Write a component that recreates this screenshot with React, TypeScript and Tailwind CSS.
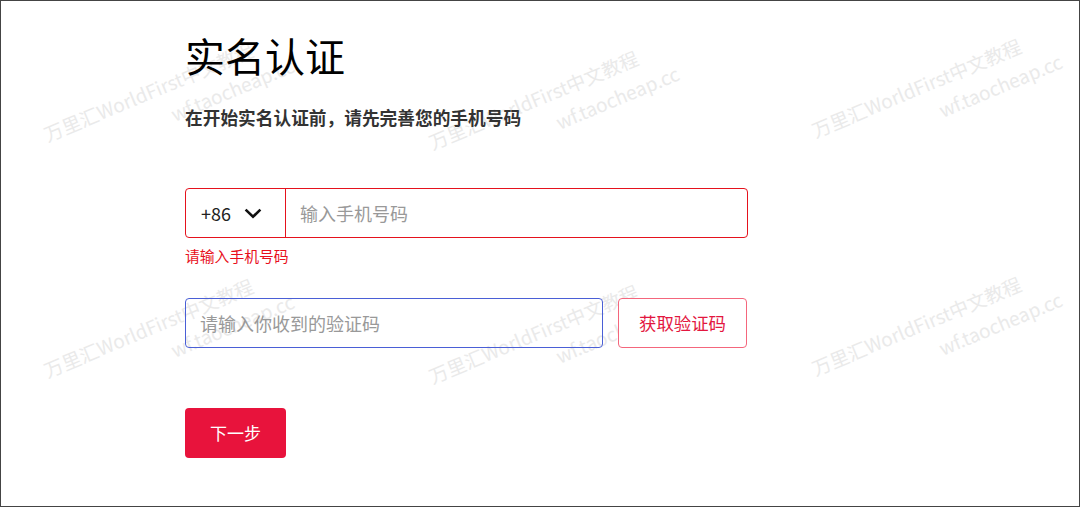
const font = { fontFamily: '"Noto Sans CJK SC", "Noto Sans", sans-serif' };

function Watermark({ className }: { className: string }) {
  return (
    <div
      className={`absolute pointer-events-none select-none origin-top-left -rotate-[22.6deg] text-[#eaeaea] text-[19px] leading-[30px] whitespace-nowrap ${className}`}
    >
      <div>万里汇WorldFirst中文教程</div>
      <div className="pl-[125px]">wf.taocheap.cc</div>
    </div>
  );
}

export default function App() {
  return (
    <div className="w-[1080px] h-[507px] bg-white border border-[#444] relative overflow-hidden text-black" style={font}>
      {/* Watermarks */}
      <Watermark className="left-[38px] top-[120px]" />
      <Watermark className="left-[423px] top-[128px]" />
      <Watermark className="left-[806px] top-[116px]" />
      <Watermark className="left-[38px] top-[356px]" />
      <Watermark className="left-[423px] top-[362px]" />
      <Watermark className="left-[806px] top-[354px]" />

      <div className="pl-[184px] pt-[26px] w-[747px] flex flex-col relative">
        <h1 className="text-[40px] leading-[56px] font-normal">实名认证</h1>
        <p className="mt-[21px] text-[17.7px] leading-[26px] font-bold text-[#333]">
          在开始实名认证前，请先完善您的手机号码
        </p>

        {/* Phone */}
        <div className="mt-[58px] h-[50px] flex items-stretch border border-[#e5121d] rounded-[4px]">
          <div className="w-[100px] flex items-center pl-[15px] gap-[13px] border-r border-[#e5121d]">
            <span className="text-[18px] text-[#222]">+86</span>
            <svg width="18" height="11" viewBox="0 0 18 11" fill="none">
              <polyline points="1.6,1.6 9,8.8 16.4,1.6" stroke="#111" strokeWidth="2.6" />
            </svg>
          </div>
          <div className="flex-1 flex items-center pl-[14px] text-[18px] text-[#999]">输入手机号码</div>
        </div>
        <p className="mt-[8px] text-[14.8px] leading-[20px] text-[#e8101c]">请输入手机号码</p>

        {/* Code */}
        <div className="mt-[32px] flex gap-[15px]">
          <div className="w-[418px] h-[50px] flex items-center pl-[14px] border border-[#4a5fd6] rounded-[4px] text-[18px] text-[#999]">
            请输入你收到的验证码
          </div>
          <button className="w-[129px] h-[50px] flex items-center justify-center border border-[#f4667c] rounded-[4px] text-[17.4px] text-[#e3173f] bg-white">
            获取验证码
          </button>
        </div>

        <button className="mt-[60px] w-[101px] h-[50px] rounded-[4px] bg-[#e8133c] text-white text-[17px] flex items-center justify-center">
          下一步
        </button>
      </div>
    </div>
  );
}
